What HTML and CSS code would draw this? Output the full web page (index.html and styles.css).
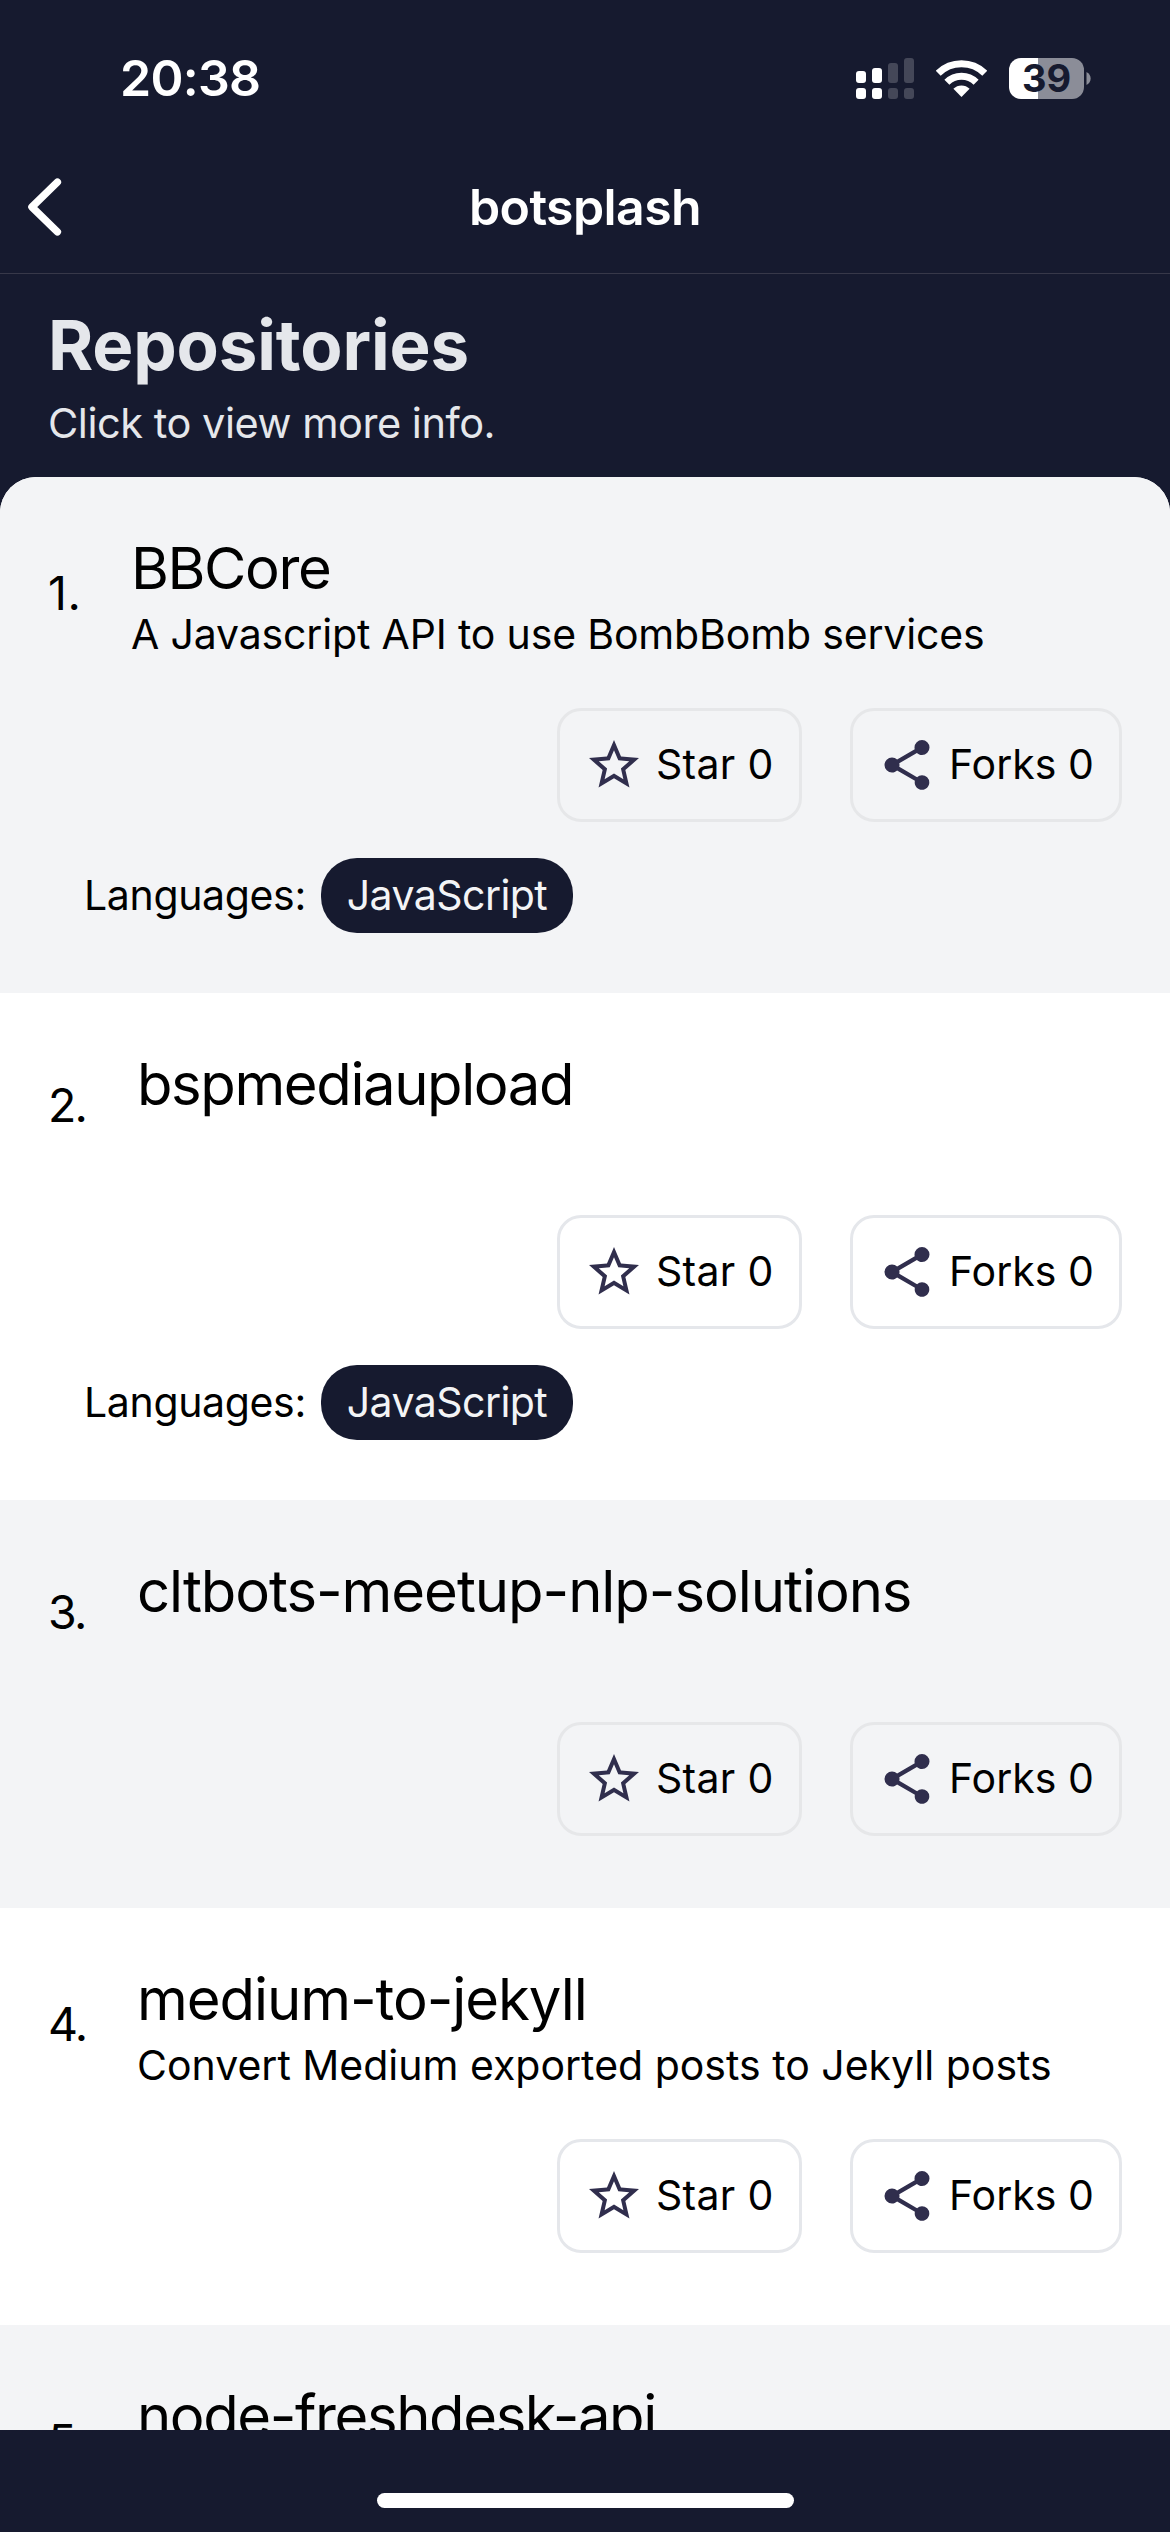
FILE: index.html
```html
<!DOCTYPE html>
<html lang="en">
<head>
<meta charset="utf-8">
<title>botsplash</title>
<link rel="stylesheet" href="styles.css">
</head>
<body>
<svg class="sprite" aria-hidden="true">
  <symbol id="star" viewBox="0 0 24 24"><path d="M12,15.39L8.24,17.66L9.23,13.38L5.91,10.5L10.29,10.13L12,6.09L13.71,10.13L18.09,10.5L14.77,13.38L15.76,17.66M22,9.24L14.81,8.63L12,2L9.19,8.63L2,9.24L7.45,13.97L5.82,21L12,17.27L18.18,21L16.54,13.97L22,9.24Z"/></symbol>
  <symbol id="share" viewBox="0 0 24 24"><path d="M18,16.08C17.24,16.08 16.56,16.38 16.04,16.85L8.91,12.7C8.96,12.47 9,12.24 9,12C9,11.76 8.96,11.53 8.91,11.3L15.96,7.19C16.5,7.69 17.21,8 18,8A3,3 0 0,0 21,5A3,3 0 0,0 18,2A3,3 0 0,0 15,5C15,5.24 15.04,5.47 15.09,5.7L8.04,9.81C7.5,9.31 6.79,9 6,9A3,3 0 0,0 3,12A3,3 0 0,0 6,15C6.79,15 7.5,14.69 8.04,14.19L15.16,18.34C15.11,18.55 15.08,18.77 15.08,19C15.08,20.61 16.39,21.91 18,21.91C19.61,21.91 20.92,20.61 20.92,19A2.92,2.92 0 0,0 18,16.08Z"/></symbol>
</svg>

<div class="status">
  <span class="clock">20:38</span>
  <div class="indicators">
    <svg class="signal" viewBox="0 0 58 41">
      <g fill="#fff">
        <rect x="0" y="13" width="10" height="12" rx="3"/><rect x="16" y="10" width="10" height="15" rx="3"/>
        <rect x="0" y="30" width="10" height="11" rx="3"/><rect x="16" y="30" width="10" height="11" rx="3"/>
      </g>
      <g fill="#444758">
        <rect x="32" y="5" width="10" height="20" rx="3"/><rect x="48" y="0" width="10" height="25" rx="3"/>
        <rect x="32" y="30" width="10" height="11" rx="3"/><rect x="48" y="30" width="10" height="11" rx="3"/>
      </g>
    </svg>
    <svg class="wifi" viewBox="0 0 51 37">
      <path d="M2.2 13.2A33.3 33.3 0 0 1 48.8 13.2M10.9 22.2A20.8 20.8 0 0 1 40.1 22.2" fill="none" stroke="#fff" stroke-width="7.1"/>
      <path d="M17.4 28.8A11.5 11.5 0 0 1 33.6 28.8L25.5 37Z" fill="#fff"/>
    </svg>
    <div class="battery"><span class="level">39</span></div>
    <svg class="nub" viewBox="0 0 5 13"><path d="M0.5 0C6 2.5 6 10.5 0.5 13Z" fill="#8b8d98"/></svg>
  </div>
</div>

<header class="nav">
  <svg class="back" viewBox="0 0 34 58"><path d="M29.4 4.2L3.9 29L29.4 53.8" fill="none" stroke="#fff" stroke-width="7.4" stroke-linecap="round" stroke-linejoin="round"/></svg>
  <h1 class="nav-title">botsplash</h1>
</header>

<section class="intro">
  <h2 class="heading">Repositories</h2>
  <p class="hint">Click to view more info.</p>
</section>

<main class="list">
  <article class="repo shaded">
    <div class="repo-head">
      <span class="index first">1.</span>
      <div><h3 class="name tight">BBCore</h3><p class="desc snug">A Javascript API to use BombBomb services</p></div>
    </div>
    <div class="actions">
      <div class="btn btn-star"><svg class="icon"><use href="#star"/></svg><span>Star 0</span></div>
      <div class="btn btn-fork"><svg class="icon"><use href="#share"/></svg><span>Forks 0</span></div>
    </div>
    <div class="langs"><span class="langs-label">Languages:</span><span class="pill">JavaScript</span></div>
  </article>

  <article class="repo">
    <div class="repo-head">
      <span class="index">2.</span>
      <div><h3 class="name tight">bspmediaupload</h3></div>
    </div>
    <div class="actions">
      <div class="btn btn-star"><svg class="icon"><use href="#star"/></svg><span>Star 0</span></div>
      <div class="btn btn-fork"><svg class="icon"><use href="#share"/></svg><span>Forks 0</span></div>
    </div>
    <div class="langs"><span class="langs-label">Languages:</span><span class="pill">JavaScript</span></div>
  </article>

  <article class="repo shaded">
    <div class="repo-head">
      <span class="index">3.</span>
      <div><h3 class="name">cltbots-meetup-nlp-solutions</h3></div>
    </div>
    <div class="actions">
      <div class="btn btn-star"><svg class="icon"><use href="#star"/></svg><span>Star 0</span></div>
      <div class="btn btn-fork"><svg class="icon"><use href="#share"/></svg><span>Forks 0</span></div>
    </div>
  </article>

  <article class="repo">
    <div class="repo-head">
      <span class="index">4.</span>
      <div><h3 class="name">medium-to-jekyll</h3><p class="desc">Convert Medium exported posts to Jekyll posts</p></div>
    </div>
    <div class="actions">
      <div class="btn btn-star"><svg class="icon"><use href="#star"/></svg><span>Star 0</span></div>
      <div class="btn btn-fork"><svg class="icon"><use href="#share"/></svg><span>Forks 0</span></div>
    </div>
  </article>

  <article class="repo shaded last">
    <div class="repo-head">
      <span class="index">5.</span>
      <div><h3 class="name tight">node-freshdesk-api</h3></div>
    </div>
  </article>
</main>

<footer class="home"><div class="home-bar"></div></footer>
</body>
</html>
```

FILE: styles.css
```css
* { box-sizing: border-box; margin: 0; padding: 0; }

body {
  width: 1170px;
  height: 2532px;
  display: flex;
  flex-direction: column;
  overflow: hidden;
  background: #161a2f;
  color: #000;
  font-family: Inter, "Liberation Sans", sans-serif;
  white-space: nowrap;
}

h1, h2, h3 { font-weight: inherit; }

.sprite { display: none; }

.status {
  flex: none;
  height: 141px;
  padding: 15px 79px 0 120px;
  display: flex;
  align-items: center;
  justify-content: space-between;
  color: #fff;
}
.clock { font-size: 50px; font-weight: 600; line-height: 60px; letter-spacing: -0.7px; }
.indicators { display: flex; align-items: center; }
.signal { width: 58px; height: 41px; margin-right: 22px; }
.wifi { width: 51px; height: 37px; margin-right: 22px; }
.battery {
  width: 75px;
  height: 41px;
  border-radius: 12px;
  background: linear-gradient(90deg, #fff 29px, #8b8d98 29px);
  display: flex;
  align-items: center;
  justify-content: center;
}
.level { color: #161a2f; font-size: 38px; font-weight: 700; line-height: 41px; }
.nub { width: 5px; height: 13px; margin-left: 2px; }

.nav {
  flex: none;
  height: 133px;
  padding: 0 28px;
  border-bottom: 1px solid #373849;
  display: grid;
  grid-template-columns: 34px 1fr 34px;
  align-items: center;
  color: #fff;
}
.back { width: 34px; height: 58px; }
.nav-title { font-size: 50px; font-weight: 600; line-height: 60px; letter-spacing: -0.6px; text-align: center; }

.intro { flex: none; height: 203px; padding: 29px 48px 0; color: #e5e7eb; }
.heading { font-size: 69px; font-weight: 700; line-height: 84px; letter-spacing: -0.15px; }
.hint { margin-top: 11px; font-size: 41.5px; line-height: 50px; letter-spacing: -0.47px; }

.list {
  flex: 1;
  min-height: 0;
  overflow: hidden;
  border-radius: 36px 36px 0 0;
  background: #fff;
}
.repo { padding: 55px 48px 72px; }
.repo:has(.langs) { padding-bottom: 60px; }
.shaded { background: #f3f4f6; }

.repo-head { display: flex; gap: 48px; min-height: 113px; }
.index { width: 41px; align-self: center; font-size: 46.5px; line-height: 58px; letter-spacing: -1.8px; }
.index.first { width: 35px; letter-spacing: 0.5px; }
.name { font-size: 58px; line-height: 72px; letter-spacing: -1.05px; }
.name.tight { letter-spacing: -1.4px; }
.desc { margin-top: 10px; font-size: 41px; line-height: 40px; }
.desc.snug { letter-spacing: -0.16px; }

.actions { margin-top: 54px; display: flex; justify-content: flex-end; gap: 48px; }
.btn {
  height: 114px;
  padding: 0 24px;
  border: 3px solid #e5e7eb;
  border-radius: 24px;
  display: flex;
  align-items: center;
  gap: 12px;
  font-size: 41px;
}
.btn span { padding-bottom: 2px; }
.shaded .btn { border-color: #e6e7e9; }
.btn-star { width: 245px; letter-spacing: 0.3px; }
.btn-fork { width: 272px; }
.icon { flex: none; width: 60px; height: 60px; fill: #302e4d; }

.langs { margin-top: 36px; padding-left: 36px; display: flex; align-items: center; gap: 13px; font-size: 41px; }
.langs-label { width: 224px; padding-bottom: 2px; letter-spacing: -0.35px; }
.pill {
  width: 252px;
  height: 75px;
  border-radius: 36px;
  background: #161a2f;
  color: #f3f4f6;
  line-height: 74px;
  letter-spacing: -0.55px;
  text-align: center;
}

.last .repo-head { min-height: 122px; }

.home { flex: none; height: 102px; padding-top: 63px; background: #161a2f; }
.home-bar { width: 417px; height: 15px; margin: 0 auto; border-radius: 8px; background: #fff; }
```
